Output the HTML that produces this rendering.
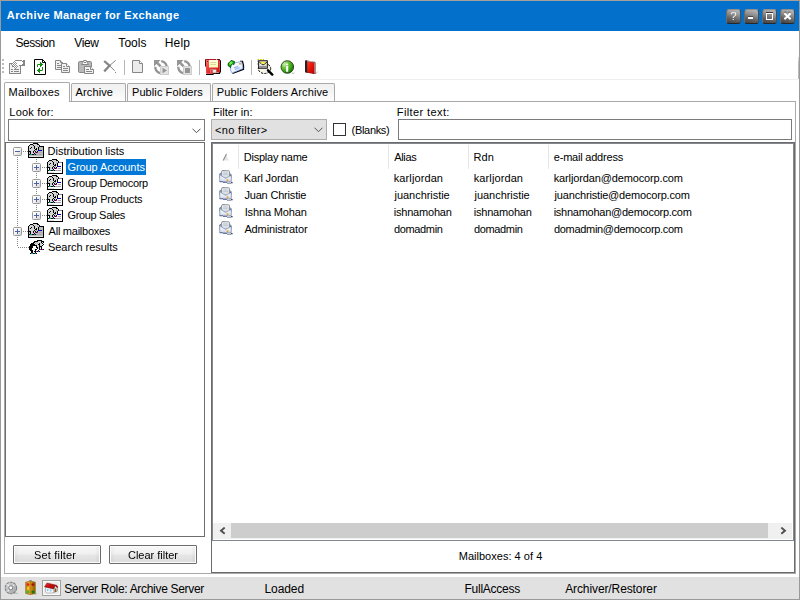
<!DOCTYPE html>
<html lang="en"><head><meta charset="utf-8"><title>Archive Manager for Exchange</title>
<style>
*{box-sizing:border-box}
html,body{margin:0;padding:0}
body{width:800px;height:600px;overflow:hidden;background:#fff;position:relative;
 font-family:"Liberation Sans",sans-serif;font-size:11px;color:#000}
header,nav,main,aside,section,footer{display:contents}
div,span,svg,i,b{position:absolute;display:block}
.t{white-space:pre;line-height:16px;height:16px;font-size:11px;color:#000}
.t12{font-size:12px}
#win{left:0;top:0;width:800px;height:600px;border:1px solid #9a9a9a;border-top-color:#a89f98}
#title{left:1px;top:1px;width:798px;height:30px;background:#0370cc}
.cb{top:9px;width:15px;height:15px;border-radius:3px;border:1px solid #4c4c4c;border-top-color:#8e8e8e;border-left-color:#6a6a6a;border-bottom-color:#262626;
 background:linear-gradient(195deg,#bcbcbc 0%,#9a9a9a 30%,#666 65%,#404040 100%)}
.cb svg{left:-1px;top:-1px}
.cb .q{left:-1px;top:-1px;width:15px;height:15px;line-height:15px;text-align:center;color:#f4f4f4;font-size:11.5px;font-weight:normal;will-change:transform}
#tbline{left:3px;top:79px;width:795px;height:1px;background:#efefef}
#tbr{left:798px;top:57px;width:1px;height:22px;background:linear-gradient(#e0e0e0,#bcbcbc 30%,#b8b8b8)}
.grip{left:2px;width:2px;height:2px;background:#bcbcbc}
.sep{top:60px;width:1px;height:15px;background:#b6b6b6}
#panel{left:4px;top:101px;width:792px;height:473px;border:1px solid #a9a9a9;background:#fff}
.tab{top:83px;height:18px;border:1px solid #a9a9a9;border-bottom:0;border-radius:2px 2px 0 0;
 background:linear-gradient(#f1f1f1,#f4f4f4 40%,#fdfdfd)}
.tab.on{top:82px;height:20px;background:#fff}
.combo{border:1px solid #7a7a7a;background:#fff}
.combo.g{border-color:#adadad;background:#e1e1e1}
#chk{left:333px;top:123px;width:13px;height:13px;border:1px solid #333;background:#fff}
#tree{left:5px;top:142px;width:200px;height:395px;border:1px solid #6d6d6d;background:#fff}
#sel{left:66px;top:159px;width:80px;height:16px;background:#0078d7}
.pm{width:9px;height:9px;border:1px solid #989898;border-radius:1.500px;background:linear-gradient(135deg,#fff 0%,#f4f4f4 50%,#d0d0d0 100%)}
.pm i{left:1px;top:3px;width:5px;height:1px;background:#4b63a7}
.pm b{left:3px;top:1px;width:1px;height:5px;background:#4b63a7}
.dv{width:1px;background-image:linear-gradient(#868686 50%,transparent 50%);background-size:1px 2px}
.dh{height:1px;background-image:linear-gradient(90deg,#868686 50%,transparent 50%);background-size:2px 1px}
.btn{top:545px;width:88px;height:19px;border:1px solid #6c6c6c;border-radius:1px;
 background:linear-gradient(90deg,rgba(0,0,0,.05),rgba(0,0,0,0) 6%,rgba(0,0,0,0) 94%,rgba(0,0,0,.05)),linear-gradient(#f8f8f8 0%,#f0f0f0 45%,#e6e6e6 55%,#dcdcdc 100%);box-shadow:inset 0 0 0 1px #fcfcfc}
.gs{will-change:transform}
#right{left:211px;top:142px;width:584px;height:431px;border:1px solid #6b6b6b;background:#fff}
#list{left:212px;top:143px;width:582px;height:398px;border:1px solid #828790;background:#fff}
.hs{top:145px;width:1px;height:24px;background:#e5e5e5}
#sb{left:213px;top:523px;width:579px;height:16px;background:#f0f0f0}
#sb .th{left:18px;top:0;width:537px;height:15px;background:#cdcdcd}
#status{left:1px;top:577px;width:798px;height:22px;background:#e1e1e1}
#hbox{left:42px;top:580px;width:19px;height:16px;border:1px solid #a0a0a0;background:#ececec;box-shadow:inset 0 0 0 1px #f8f8f8}
</style></head>
<body>

<div id="win"></div>
<header>
<div id="title"></div>
<span class="t" style="left:6.82px;top:7px;letter-spacing:0.401px;font-weight:bold;color:#fff">Archive Manager for Exchange</span>
<div class="cb" style="left:726px"><span class="q">?</span></div>
<div class="cb" style="left:744px"><svg style="left:-1px;top:-1px" width="15" height="15" viewBox="0 0 15 15"><g shape-rendering="crispEdges"><rect x="4" y="7" width="5" height="1" fill="#4a4a4a"/><rect x="4" y="8" width="5" height="2" fill="#fff"/></g></svg></div>
<div class="cb" style="left:762px"><svg style="left:-1px;top:-1px" width="15" height="15" viewBox="0 0 15 15"><g shape-rendering="crispEdges"><rect x="4" y="3" width="7" height="1" fill="#3a3a3a"/><rect x="4.500" y="4.500" width="6" height="6" fill="none" stroke="#fff"/></g></svg></div>
<div class="cb" style="left:780px"><svg style="left:-1px;top:-1px" width="15" height="15" viewBox="0 0 15 15"><path d="M4.500 3.200h6" stroke="#3a3a3a" stroke-width="0.800" stroke-dasharray="2 2"/><path d="M4.400 4.300l6.200 6M10.600 4.300l-6.200 6" stroke="#fff" stroke-width="2"/></svg></div>
</header>
<nav>
<span class="t t12" style="left:15.47px;top:35px;letter-spacing:-0.500px">Session</span>
<span class="t t12" style="left:74.25px;top:35px;letter-spacing:-0.403px">View</span>
<span class="t t12" style="left:118.37px;top:35px;letter-spacing:0.028px">Tools</span>
<span class="t t12" style="left:164.83px;top:35px;letter-spacing:0.108px">Help</span>
</nav>
<section class="toolbar">
<i class="grip" style="top:59px"></i>
<i class="grip" style="top:63px"></i>
<i class="grip" style="top:67px"></i>
<i class="grip" style="top:71px"></i>
<svg style="left:9px;top:60px" width="16" height="14" viewBox="0 0 16 14"><g shape-rendering="crispEdges"><rect x="0" y="3" width="12" height="11" fill="#868686"/><rect x="1" y="4" width="10" height="9" fill="#f1f1f1"/></g><g shape-rendering="crispEdges"><rect x="6" y="0" width="1" height="1" fill="#8f8f8f"/><rect x="5" y="1" width="1" height="1" fill="#8f8f8f"/><rect x="6" y="1" width="1" height="1" fill="#fff"/><rect x="4" y="2" width="1" height="1" fill="#8f8f8f"/><rect x="5" y="2" width="1" height="1" fill="#fff"/><rect x="6" y="2" width="1" height="1" fill="#8f8f8f"/><rect x="3" y="3" width="1" height="1" fill="#8f8f8f"/><rect x="4" y="3" width="1" height="1" fill="#fff"/><rect x="5" y="3" width="1" height="1" fill="#8f8f8f"/><rect x="6" y="3" width="1" height="1" fill="#fff"/><rect x="7" y="3" width="1" height="1" fill="#8f8f8f"/><rect x="2" y="4" width="1" height="1" fill="#8f8f8f"/><rect x="3" y="4" width="1" height="1" fill="#fff"/><rect x="4" y="4" width="1" height="1" fill="#8f8f8f"/><rect x="5" y="4" width="1" height="1" fill="#fff"/><rect x="6" y="4" width="1" height="1" fill="#8f8f8f"/><rect x="7" y="4" width="1" height="1" fill="#fff"/><rect x="8" y="4" width="1" height="1" fill="#8f8f8f"/><rect x="3" y="5" width="1" height="1" fill="#8f8f8f"/><rect x="4" y="5" width="1" height="1" fill="#fff"/><rect x="5" y="5" width="1" height="1" fill="#8f8f8f"/><rect x="6" y="5" width="1" height="1" fill="#fff"/><rect x="7" y="5" width="1" height="1" fill="#8f8f8f"/><rect x="4" y="6" width="1" height="1" fill="#8f8f8f"/><rect x="5" y="6" width="1" height="1" fill="#fff"/><rect x="6" y="6" width="1" height="1" fill="#8f8f8f"/><rect x="7" y="6" width="1" height="1" fill="#fff"/><rect x="8" y="6" width="1" height="1" fill="#8f8f8f"/><rect x="5" y="7" width="1" height="1" fill="#8f8f8f"/><rect x="6" y="7" width="1" height="1" fill="#fff"/><rect x="7" y="7" width="1" height="1" fill="#8f8f8f"/><rect x="6" y="8" width="1" height="1" fill="#8f8f8f"/></g><g shape-rendering="crispEdges"><rect x="2" y="9" width="2" height="1" fill="#868686"/><rect x="5" y="9" width="5" height="1" fill="#868686"/><rect x="2" y="11" width="2" height="1" fill="#868686"/><rect x="5" y="11" width="5" height="1" fill="#868686"/><rect x="3" y="5" width="1" height="2" fill="#868686"/><rect x="4" y="6" width="1" height="1" fill="#868686"/></g><g shape-rendering="crispEdges"><rect x="8" y="1" width="6" height="4" fill="#fff"/><rect x="7" y="0" width="6" height="1" fill="#868686"/><rect x="10" y="5" width="4" height="1" fill="#868686"/><rect x="14" y="0" width="2" height="6" fill="#868686"/><rect x="13" y="1" width="1" height="1" fill="#868686"/><rect x="13" y="4" width="1" height="1" fill="#868686"/></g></svg>
<svg style="left:34px;top:59px" width="12" height="16" viewBox="0 0 12 16"><path d="M0.500 0.500H8.500L11.500 3.500V15.500H0.500Z" fill="#fff" stroke="#000"/><path d="M8.500 0.500V3.500H11.500" fill="none" stroke="#000"/><g shape-rendering="crispEdges"><rect x="6" y="3" width="1" height="5" fill="#0f8c0f"/><rect x="7" y="4" width="1" height="3" fill="#0f8c0f"/><rect x="8" y="5" width="1" height="1" fill="#0f8c0f"/><rect x="4" y="5" width="2" height="1" fill="#0f8c0f"/><rect x="3" y="6" width="1" height="2" fill="#0f8c0f"/><rect x="3" y="5" width="1" height="1" fill="#5fb85f"/><rect x="5" y="9" width="1" height="5" fill="#0f8c0f"/><rect x="4" y="10" width="1" height="3" fill="#0f8c0f"/><rect x="3" y="11" width="1" height="1" fill="#0f8c0f"/><rect x="6" y="11" width="2" height="1" fill="#0f8c0f"/><rect x="8" y="8" width="1" height="3" fill="#0f8c0f"/><rect x="8" y="11" width="1" height="1" fill="#5fb85f"/></g></svg>
<svg style="left:55px;top:60px" width="15" height="13" viewBox="0 0 15 13"><path d="M0.500 0.500H5.500L7.500 2.500V9.500H0.500Z" fill="#f1f1f1" stroke="#868686"/><path d="M5.500 0.500V2.500H7.500" fill="#fff" stroke="#868686"/><path d="M6.500 3.500H11.500L14.500 6.500V12.500H6.500Z" fill="#f1f1f1" stroke="#868686"/><path d="M11.500 3.500V6.500H14.500" fill="#fff" stroke="#868686"/><g shape-rendering="crispEdges"><rect x="2" y="3" width="2" height="1" fill="#868686"/><rect x="2" y="5" width="4" height="1" fill="#868686"/><rect x="2" y="7" width="4" height="1" fill="#868686"/><rect x="8" y="6" width="2" height="1" fill="#868686"/><rect x="8" y="8" width="5" height="1" fill="#868686"/><rect x="8" y="10" width="5" height="1" fill="#868686"/></g></svg>
<svg style="left:78px;top:60px" width="16" height="14" viewBox="0 0 16 14"><rect x="0.500" y="1.500" width="13" height="11" rx="1.200" fill="#b9b9b9" stroke="#868686"/><path d="M3.500 4.500L5 2.200L5.500 0.500H8.500L9 2.200L10.500 4.500Z" fill="#fafafa" stroke="#868686"/><g shape-rendering="crispEdges"><rect x="6" y="2" width="2" height="1" fill="#868686"/></g><path d="M6.500 6.500H12.500L15.500 9.500V13.500H6.500Z" fill="#f1f1f1" stroke="#868686"/><path d="M12.500 6.500V9.500H15.500" fill="#fff" stroke="#868686"/><g shape-rendering="crispEdges"><rect x="8" y="9" width="3" height="1" fill="#868686"/><rect x="8" y="11" width="6" height="1" fill="#868686"/></g></svg>
<svg style="left:103px;top:60px" width="14" height="14" viewBox="0 0 14 14"><path d="M1.200 1L6.500 5.700L1.200 11.400" fill="none" stroke="#868686" stroke-width="2.300" stroke-linejoin="miter"/><path d="M12.700 0.300L6.500 5.700L11.700 10.700" fill="none" stroke="#868686" stroke-width="1"/><rect x="12" y="12" width="1" height="1" fill="#868686"/></svg>
<i class="sep" style="left:124px"></i>
<svg style="left:132px;top:60px" width="11" height="13" viewBox="0 0 11 13"><path d="M0.500 0.500H7.500L10.500 3.500V12.500H0.500Z" fill="#ebebeb" stroke="#868686"/><path d="M7.500 0.500V3.500H10.500" fill="#fff" stroke="#868686"/></svg>
<svg style="left:154px;top:60px" width="15" height="15" viewBox="0 0 15 15"><path d="M0 0H6.500L4.300 2.200L7.500 5.400L5.700 7.200L2.500 4L0 6.500Z" fill="#959595"/><path d="M7.200 1.200A7 7 0 0 1 12.800 6.500" fill="none" stroke="#959595" stroke-width="2.300"/><path d="M1.200 6.800A7 7 0 0 0 6.800 13.300" fill="none" stroke="#959595" stroke-width="2.300"/><rect x="6.500" y="6.500" width="8" height="8" fill="#e3e3e3" stroke="#cdcdcd"/><path d="M8.500 7.800V13.200L13 10.500Z" fill="#959595"/></svg>
<svg style="left:177px;top:60px" width="15" height="15" viewBox="0 0 15 15"><path d="M0 0H6.500L4.300 2.200L7.500 5.400L5.700 7.200L2.500 4L0 6.500Z" fill="#959595"/><path d="M7.200 1.200A7 7 0 0 1 12.800 6.500" fill="none" stroke="#959595" stroke-width="2.300"/><path d="M1.200 6.800A7 7 0 0 0 6.800 13.300" fill="none" stroke="#959595" stroke-width="2.300"/><rect x="6.500" y="6.500" width="8" height="8" fill="#e3e3e3" stroke="#cdcdcd"/><rect x="8" y="8" width="5" height="5" fill="#959595"/></svg>
<i class="sep" style="left:199px"></i>
<svg style="left:205px;top:59px" width="16" height="16" viewBox="0 0 16 16"><defs><linearGradient id="gs" x1="0" y1="0" x2="1" y2="1"><stop offset="0" stop-color="#f57878"/><stop offset="0.500" stop-color="#e83030"/><stop offset="1" stop-color="#d01010"/></linearGradient></defs><path d="M1 15.500H8V14.500H14.500V13H15.500V2L14 0.500H12" fill="none" stroke="#000" stroke-width="1.200"/><path d="M0.500 0.500H13.500L14.800 1.800V13.500H7.500V14.800H1.200Z" fill="url(#gs)"/><path d="M0.500 0.500V7.500" stroke="#5a0808" stroke-width="1"/><path d="M0.500 0.500H11" stroke="#b01818" stroke-width="1"/><rect x="4" y="1.200" width="9" height="7.300" fill="#fcfbc0"/><rect x="4" y="1.200" width="9" height="1.500" fill="#fffef0"/><path d="M5.500 3.500H11M5.500 5.500H11" stroke="#d8d6a0" stroke-width="1"/><rect x="5" y="10.300" width="6.500" height="3.700" rx="0.800" fill="#e6e6e6" stroke="#a05050" stroke-width="0.600"/><rect x="5.500" y="11" width="2.200" height="3.500" fill="#f03030"/><rect x="2" y="2" width="1" height="1" fill="#b01010"/></svg>
<svg style="left:227px;top:60px" width="18" height="15" viewBox="0 0 18 15"><defs><linearGradient id="gm" x1="0" y1="0" x2="1" y2="1"><stop offset="0" stop-color="#ffffff"/><stop offset="0.600" stop-color="#eef4ff"/><stop offset="1" stop-color="#cfe0ff"/></linearGradient><radialGradient id="gg" cx="0.450" cy="0.350" r="0.700"><stop offset="0" stop-color="#a0ff70"/><stop offset="0.500" stop-color="#18c018"/><stop offset="1" stop-color="#087008"/></radialGradient></defs><path d="M5.500 13.500L16.500 9.200V5.500L15.500 1.500H13" fill="none" stroke="#000" stroke-width="1.300"/><path d="M4 3.500L14.500 1.500L16 8.500L5 13L3.500 10Z" fill="url(#gm)" stroke="#6a90e0" stroke-width="0.700"/><path d="M7 8L11 6.300M8 9.500L12.500 7.500" stroke="#8fb0f4" stroke-width="1.100"/><rect x="12.200" y="3" width="1.600" height="1.600" fill="#f59020"/><path d="M1 5.500Q0.500 2.500 3.500 1.500L4 0.500L7.500 1.500L7 4.500L5.500 4Q3.500 4.500 3.500 7.500Z" fill="url(#gg)" stroke="#065006" stroke-width="0.900"/></svg>
<i class="sep" style="left:251px"></i>
<svg style="left:257px;top:59px" width="17" height="17" viewBox="0 0 17 17"><ellipse cx="7.500" cy="9.500" rx="6.200" ry="5" fill="#f6f5ea" stroke="#000" stroke-width="1" stroke-dasharray="2.200 1.100"/><path d="M0.500 0.500H7" stroke="#cfc000" stroke-width="1.400" stroke-dasharray="1.500 1.200"/><path d="M0.500 1.500V6" stroke="#b8b8d0" stroke-width="1.200" stroke-dasharray="1.500 1.200"/><rect x="1.700" y="1.800" width="8.600" height="7.400" fill="#fff" stroke="#000" stroke-width="1"/><path d="M2.500 3.200L6 6.200L9.800 3.200" fill="none" stroke="#000" stroke-width="1"/><path d="M4 3.300L5.500 4.800M6 2.800L8 4.300" stroke="#efe400" stroke-width="1.600"/><path d="M8.600 5.500L9.600 7" stroke="#cfc000" stroke-width="1.200"/><rect x="2.200" y="6.800" width="7.600" height="2" fill="#8a8a8a"/><rect x="2.200" y="6.300" width="7.600" height="0.800" fill="#d8d8e4"/><path d="M11 11.300L15.300 15.600" stroke="#000" stroke-width="2.400" stroke-linecap="round"/></svg>
<svg style="left:280px;top:60px" width="15" height="15" viewBox="0 0 15 15"><defs><radialGradient id="gi" cx="0.300" cy="0.280" r="0.850"><stop offset="0" stop-color="#d8f0c0"/><stop offset="0.350" stop-color="#6cc43a"/><stop offset="0.700" stop-color="#2f9c10"/><stop offset="1" stop-color="#0f5a04"/></radialGradient></defs><ellipse cx="13" cy="13.300" rx="1.600" ry="0.700" fill="#c8c8c8"/><circle cx="7.300" cy="7" r="6.300" fill="url(#gi)" stroke="#2c3c1c" stroke-width="0.900"/><rect x="6.100" y="6" width="2.100" height="5.800" rx="0.400" fill="#fff"/><rect x="6.100" y="3.600" width="2.100" height="1.600" rx="0.700" fill="#fff" opacity="0.900"/></svg>
<svg style="left:304px;top:60px" width="15" height="15" viewBox="0 0 15 15"><defs><linearGradient id="gb" x1="0" y1="0" x2="1" y2="1"><stop offset="0" stop-color="#ff4030"/><stop offset="0.500" stop-color="#e81408"/><stop offset="1" stop-color="#b40404"/></linearGradient></defs><path d="M10.500 13.500L14.500 11L12 14.200Z" fill="#b4b4b4" opacity="0.800"/><path d="M1 1.200Q1.500 0 3 0.500L10.500 1.800Q11.500 2 11.500 3V13Q11.500 14.200 10.300 14L2 12.600Q1 12.400 1 11.500Z" fill="#6a1010"/><path d="M1 1.500Q1.200 0.300 2.500 0.600L3.200 1V12.600L2 12.400Q1 12.200 1 11.300Z" fill="#1c2626"/><path d="M3.200 1.600L10 2.900V13.400L3.200 12.300Z" fill="url(#gb)"/><path d="M3 0.900L10.500 2.200" stroke="#e8e8e8" stroke-width="0.700"/><path d="M10.600 2.800V13.500" stroke="#e0b0b0" stroke-width="0.700"/></svg>
<div id="tbline"></div><div id="tbr"></div>
</section>
<main>
<section class="tabs">
<div id="panel"></div>
<div class="tab" style="left:71px;width:55px"></div>
<div class="tab" style="left:127px;width:84px"></div>
<div class="tab" style="left:212px;width:123px"></div>
<div class="tab on" style="left:4px;width:66px"></div>
<span class="t" style="left:8.55px;top:84px;letter-spacing:0.185px">Mailboxes</span>
<span class="t" style="left:75.59px;top:84px;letter-spacing:0.122px">Archive</span>
<span class="t" style="left:131.99px;top:84px;letter-spacing:0.088px">Public Folders</span>
<span class="t" style="left:216.84px;top:84px;letter-spacing:0.123px">Public Folders Archive</span>
</section>
<aside>
<span class="t" style="left:9.37px;top:104px;letter-spacing:0.184px">Look for:</span>
<div class="combo" style="left:8px;top:119px;width:197px;height:22px"></div><svg style="left:192px;top:128px" width="9" height="6" viewBox="0 0 9 6"><path d="M0.500 0.700l4 4 4-4" fill="none" stroke="#505050" stroke-width="1"/></svg>
<div id="tree"></div><div id="sel"></div>
<i class="dv" style="left:17px;top:157px;height:90px"></i>
<i class="dv" style="left:36px;top:159px;height:52px"></i>
<i class="dh" style="left:23px;top:151px;width:5px"></i>
<i class="dh" style="left:42px;top:167px;width:5px"></i>
<i class="dh" style="left:42px;top:183px;width:5px"></i>
<i class="dh" style="left:42px;top:199px;width:5px"></i>
<i class="dh" style="left:42px;top:215px;width:5px"></i>
<i class="dh" style="left:23px;top:231px;width:5px"></i>
<i class="dh" style="left:18px;top:247px;width:11px"></i>
<div class="pm" style="left:13px;top:147px"><i></i></div>
<div class="pm" style="left:32px;top:163px"><i></i><b></b></div>
<div class="pm" style="left:32px;top:179px"><i></i><b></b></div>
<div class="pm" style="left:32px;top:195px"><i></i><b></b></div>
<div class="pm" style="left:32px;top:211px"><i></i><b></b></div>
<div class="pm" style="left:13px;top:227px"><i></i><b></b></div>
<svg style="left:28px;top:143px" width="16" height="16" viewBox="0 0 16 16"><g shape-rendering="crispEdges"><path fill="#000" d="M5 0h5v1h-5zM2 1h3v1h-3zM9 1h2v1h-2zM1 2h1v1h-1zM5 2h1v1h-1zM11 2h1v1h-1zM0 3h1v1h-1zM6 3h1v1h-1zM11 3h5v1h-5zM0 4h1v1h-1zM3 4h1v1h-1zM6 4h1v1h-1zM10 4h1v1h-1zM15 4h1v1h-1zM0 5h1v1h-1zM2 5h1v1h-1zM6 5h1v1h-1zM8 5h1v1h-1zM10 5h1v1h-1zM15 5h1v1h-1zM0 6h1v1h-1zM7 6h2v1h-2zM10 6h1v1h-1zM15 6h1v1h-1zM0 7h1v1h-1zM6 7h1v1h-1zM15 7h1v1h-1zM0 8h3v1h-3zM5 8h1v1h-1zM7 8h1v1h-1zM9 8h1v1h-1zM15 8h1v1h-1zM0 9h1v1h-1zM2 9h1v1h-1zM5 9h1v1h-1zM8 9h1v1h-1zM15 9h1v1h-1zM0 10h1v1h-1zM2 10h1v1h-1zM6 10h1v1h-1zM15 10h1v1h-1zM0 11h2v1h-2zM4 11h2v1h-2zM7 11h1v1h-1zM15 11h1v1h-1zM0 12h1v1h-1zM15 12h1v1h-1zM0 13h1v1h-1zM15 13h1v1h-1zM0 14h16v1h-16z"/><path fill="#d4d4d4" d="M5 1h4v1h-4zM2 2h3v1h-3zM6 2h5v1h-5zM1 3h5v1h-5zM7 3h2v1h-2zM10 3h1v1h-1zM1 4h2v1h-2zM4 4h2v1h-2zM7 4h3v1h-3zM1 5h1v1h-1zM3 5h3v1h-3zM7 5h1v1h-1zM9 5h1v1h-1zM1 6h6v1h-6zM9 6h1v1h-1zM2 7h4v1h-4zM7 7h1v1h-1zM3 8h2v1h-2zM6 8h1v1h-1zM8 8h1v1h-1zM3 9h2v1h-2zM6 9h1v1h-1zM3 10h3v1h-3z"/><path fill="#a8a8a8" d="M9 3h1v1h-1zM1 7h1v1h-1zM8 7h1v1h-1zM11 9h3v1h-3zM8 11h6v1h-6z"/><path fill="#bcbcbc" d="M11 4h4v1h-4zM11 5h4v1h-4zM11 6h4v1h-4zM9 7h1v1h-1zM14 7h1v1h-1zM10 8h5v1h-5zM1 9h1v1h-1zM10 9h1v1h-1zM14 9h1v1h-1zM1 10h1v1h-1zM7 10h8v1h-8zM14 11h1v1h-1zM1 12h14v1h-14z"/><path fill="#0000b0" d="M10 7h4v1h-4z"/><path fill="#c000c0" d="M7 9h1v1h-1zM9 9h1v1h-1z"/><path fill="#00a8a8" d="M2 11h2v1h-2zM6 11h1v1h-1z"/><path fill="#dedede" d="M1 13h14v1h-14z"/></g></svg>
<svg style="left:47px;top:159px" width="16" height="16" viewBox="0 0 16 16"><g shape-rendering="crispEdges"><path fill="#000" d="M5 0h5v1h-5zM2 1h3v1h-3zM9 1h2v1h-2zM1 2h1v1h-1zM5 2h1v1h-1zM11 2h1v1h-1zM0 3h1v1h-1zM6 3h1v1h-1zM11 3h1v1h-1zM15 3h1v1h-1zM0 4h1v1h-1zM3 4h1v1h-1zM6 4h1v1h-1zM10 4h1v1h-1zM15 4h1v1h-1zM0 5h1v1h-1zM2 5h1v1h-1zM6 5h1v1h-1zM8 5h1v1h-1zM10 5h1v1h-1zM15 5h1v1h-1zM0 6h1v1h-1zM7 6h2v1h-2zM10 6h1v1h-1zM15 6h1v1h-1zM0 7h1v1h-1zM6 7h1v1h-1zM15 7h1v1h-1zM0 8h3v1h-3zM5 8h1v1h-1zM7 8h1v1h-1zM9 8h1v1h-1zM15 8h1v1h-1zM0 9h1v1h-1zM2 9h1v1h-1zM5 9h1v1h-1zM8 9h1v1h-1zM15 9h1v1h-1zM0 10h1v1h-1zM2 10h1v1h-1zM6 10h1v1h-1zM15 10h1v1h-1zM0 11h2v1h-2zM4 11h2v1h-2zM7 11h1v1h-1zM15 11h1v1h-1zM0 12h1v1h-1zM15 12h1v1h-1zM0 13h1v1h-1zM15 13h1v1h-1zM0 14h16v1h-16z"/><path fill="#d4d4d4" d="M5 1h4v1h-4zM2 2h3v1h-3zM6 2h5v1h-5zM1 3h5v1h-5zM7 3h2v1h-2zM10 3h1v1h-1zM1 4h2v1h-2zM4 4h2v1h-2zM7 4h3v1h-3zM1 5h1v1h-1zM3 5h3v1h-3zM7 5h1v1h-1zM9 5h1v1h-1zM1 6h6v1h-6zM9 6h1v1h-1zM2 7h4v1h-4zM7 7h1v1h-1zM3 8h2v1h-2zM6 8h1v1h-1zM8 8h1v1h-1zM3 9h2v1h-2zM6 9h1v1h-1zM3 10h3v1h-3z"/><path fill="#a8a8a8" d="M9 3h1v1h-1zM1 7h1v1h-1zM8 7h1v1h-1zM11 9h3v1h-3zM8 11h6v1h-6z"/><path fill="#8a8a8a" d="M12 3h3v1h-3z"/><path fill="#fff" d="M11 4h4v1h-4zM11 5h4v1h-4zM11 6h4v1h-4zM9 7h1v1h-1zM14 7h1v1h-1zM10 8h5v1h-5zM1 9h1v1h-1zM10 9h1v1h-1zM14 9h1v1h-1zM1 10h1v1h-1zM7 10h8v1h-8zM14 11h1v1h-1zM1 12h14v1h-14zM7 13h8v1h-8z"/><path fill="#0000b0" d="M10 7h4v1h-4z"/><path fill="#c000c0" d="M7 9h1v1h-1zM9 9h1v1h-1z"/><path fill="#00a8a8" d="M2 11h2v1h-2zM6 11h1v1h-1z"/><path fill="#dedede" d="M1 13h6v1h-6z"/></g></svg>
<svg style="left:47px;top:175px" width="16" height="16" viewBox="0 0 16 16"><g shape-rendering="crispEdges"><path fill="#000" d="M5 0h5v1h-5zM2 1h3v1h-3zM9 1h2v1h-2zM1 2h1v1h-1zM5 2h1v1h-1zM11 2h1v1h-1zM0 3h1v1h-1zM6 3h1v1h-1zM11 3h1v1h-1zM15 3h1v1h-1zM0 4h1v1h-1zM3 4h1v1h-1zM6 4h1v1h-1zM10 4h1v1h-1zM15 4h1v1h-1zM0 5h1v1h-1zM2 5h1v1h-1zM6 5h1v1h-1zM8 5h1v1h-1zM10 5h1v1h-1zM15 5h1v1h-1zM0 6h1v1h-1zM7 6h2v1h-2zM10 6h1v1h-1zM15 6h1v1h-1zM0 7h1v1h-1zM6 7h1v1h-1zM15 7h1v1h-1zM0 8h3v1h-3zM5 8h1v1h-1zM7 8h1v1h-1zM9 8h1v1h-1zM15 8h1v1h-1zM0 9h1v1h-1zM2 9h1v1h-1zM5 9h1v1h-1zM8 9h1v1h-1zM15 9h1v1h-1zM0 10h1v1h-1zM2 10h1v1h-1zM6 10h1v1h-1zM15 10h1v1h-1zM0 11h2v1h-2zM4 11h2v1h-2zM7 11h1v1h-1zM15 11h1v1h-1zM0 12h1v1h-1zM15 12h1v1h-1zM0 13h1v1h-1zM15 13h1v1h-1zM0 14h16v1h-16z"/><path fill="#d4d4d4" d="M5 1h4v1h-4zM2 2h3v1h-3zM6 2h5v1h-5zM1 3h5v1h-5zM7 3h2v1h-2zM10 3h1v1h-1zM1 4h2v1h-2zM4 4h2v1h-2zM7 4h3v1h-3zM1 5h1v1h-1zM3 5h3v1h-3zM7 5h1v1h-1zM9 5h1v1h-1zM1 6h6v1h-6zM9 6h1v1h-1zM2 7h4v1h-4zM7 7h1v1h-1zM3 8h2v1h-2zM6 8h1v1h-1zM8 8h1v1h-1zM3 9h2v1h-2zM6 9h1v1h-1zM3 10h3v1h-3z"/><path fill="#a8a8a8" d="M9 3h1v1h-1zM1 7h1v1h-1zM8 7h1v1h-1zM11 9h3v1h-3zM8 11h6v1h-6z"/><path fill="#8a8a8a" d="M12 3h3v1h-3z"/><path fill="#fff" d="M11 4h4v1h-4zM11 5h4v1h-4zM11 6h4v1h-4zM9 7h1v1h-1zM14 7h1v1h-1zM10 8h5v1h-5zM1 9h1v1h-1zM10 9h1v1h-1zM14 9h1v1h-1zM1 10h1v1h-1zM7 10h8v1h-8zM14 11h1v1h-1zM1 12h14v1h-14zM7 13h8v1h-8z"/><path fill="#0000b0" d="M10 7h4v1h-4z"/><path fill="#c000c0" d="M7 9h1v1h-1zM9 9h1v1h-1z"/><path fill="#00a8a8" d="M2 11h2v1h-2zM6 11h1v1h-1z"/><path fill="#dedede" d="M1 13h6v1h-6z"/></g></svg>
<svg style="left:47px;top:191px" width="16" height="16" viewBox="0 0 16 16"><g shape-rendering="crispEdges"><path fill="#000" d="M5 0h5v1h-5zM2 1h3v1h-3zM9 1h2v1h-2zM1 2h1v1h-1zM5 2h1v1h-1zM11 2h1v1h-1zM0 3h1v1h-1zM6 3h1v1h-1zM11 3h1v1h-1zM15 3h1v1h-1zM0 4h1v1h-1zM3 4h1v1h-1zM6 4h1v1h-1zM10 4h1v1h-1zM15 4h1v1h-1zM0 5h1v1h-1zM2 5h1v1h-1zM6 5h1v1h-1zM8 5h1v1h-1zM10 5h1v1h-1zM15 5h1v1h-1zM0 6h1v1h-1zM7 6h2v1h-2zM10 6h1v1h-1zM15 6h1v1h-1zM0 7h1v1h-1zM6 7h1v1h-1zM15 7h1v1h-1zM0 8h3v1h-3zM5 8h1v1h-1zM7 8h1v1h-1zM9 8h1v1h-1zM15 8h1v1h-1zM0 9h1v1h-1zM2 9h1v1h-1zM5 9h1v1h-1zM8 9h1v1h-1zM15 9h1v1h-1zM0 10h1v1h-1zM2 10h1v1h-1zM6 10h1v1h-1zM15 10h1v1h-1zM0 11h2v1h-2zM4 11h2v1h-2zM7 11h1v1h-1zM15 11h1v1h-1zM0 12h1v1h-1zM15 12h1v1h-1zM0 13h1v1h-1zM15 13h1v1h-1zM0 14h16v1h-16z"/><path fill="#d4d4d4" d="M5 1h4v1h-4zM2 2h3v1h-3zM6 2h5v1h-5zM1 3h5v1h-5zM7 3h2v1h-2zM10 3h1v1h-1zM1 4h2v1h-2zM4 4h2v1h-2zM7 4h3v1h-3zM1 5h1v1h-1zM3 5h3v1h-3zM7 5h1v1h-1zM9 5h1v1h-1zM1 6h6v1h-6zM9 6h1v1h-1zM2 7h4v1h-4zM7 7h1v1h-1zM3 8h2v1h-2zM6 8h1v1h-1zM8 8h1v1h-1zM3 9h2v1h-2zM6 9h1v1h-1zM3 10h3v1h-3z"/><path fill="#a8a8a8" d="M9 3h1v1h-1zM1 7h1v1h-1zM8 7h1v1h-1zM11 9h3v1h-3zM8 11h6v1h-6z"/><path fill="#8a8a8a" d="M12 3h3v1h-3z"/><path fill="#fff" d="M11 4h4v1h-4zM11 5h4v1h-4zM11 6h4v1h-4zM9 7h1v1h-1zM14 7h1v1h-1zM10 8h5v1h-5zM1 9h1v1h-1zM10 9h1v1h-1zM14 9h1v1h-1zM1 10h1v1h-1zM7 10h8v1h-8zM14 11h1v1h-1zM1 12h14v1h-14zM7 13h8v1h-8z"/><path fill="#0000b0" d="M10 7h4v1h-4z"/><path fill="#c000c0" d="M7 9h1v1h-1zM9 9h1v1h-1z"/><path fill="#00a8a8" d="M2 11h2v1h-2zM6 11h1v1h-1z"/><path fill="#dedede" d="M1 13h6v1h-6z"/></g></svg>
<svg style="left:47px;top:207px" width="16" height="16" viewBox="0 0 16 16"><g shape-rendering="crispEdges"><path fill="#000" d="M5 0h5v1h-5zM2 1h3v1h-3zM9 1h2v1h-2zM1 2h1v1h-1zM5 2h1v1h-1zM11 2h1v1h-1zM0 3h1v1h-1zM6 3h1v1h-1zM11 3h1v1h-1zM15 3h1v1h-1zM0 4h1v1h-1zM3 4h1v1h-1zM6 4h1v1h-1zM10 4h1v1h-1zM15 4h1v1h-1zM0 5h1v1h-1zM2 5h1v1h-1zM6 5h1v1h-1zM8 5h1v1h-1zM10 5h1v1h-1zM15 5h1v1h-1zM0 6h1v1h-1zM7 6h2v1h-2zM10 6h1v1h-1zM15 6h1v1h-1zM0 7h1v1h-1zM6 7h1v1h-1zM15 7h1v1h-1zM0 8h3v1h-3zM5 8h1v1h-1zM7 8h1v1h-1zM9 8h1v1h-1zM15 8h1v1h-1zM0 9h1v1h-1zM2 9h1v1h-1zM5 9h1v1h-1zM8 9h1v1h-1zM15 9h1v1h-1zM0 10h1v1h-1zM2 10h1v1h-1zM6 10h1v1h-1zM15 10h1v1h-1zM0 11h2v1h-2zM4 11h2v1h-2zM7 11h1v1h-1zM15 11h1v1h-1zM0 12h1v1h-1zM15 12h1v1h-1zM0 13h1v1h-1zM15 13h1v1h-1zM0 14h16v1h-16z"/><path fill="#d4d4d4" d="M5 1h4v1h-4zM2 2h3v1h-3zM6 2h5v1h-5zM1 3h5v1h-5zM7 3h2v1h-2zM10 3h1v1h-1zM1 4h2v1h-2zM4 4h2v1h-2zM7 4h3v1h-3zM1 5h1v1h-1zM3 5h3v1h-3zM7 5h1v1h-1zM9 5h1v1h-1zM1 6h6v1h-6zM9 6h1v1h-1zM2 7h4v1h-4zM7 7h1v1h-1zM3 8h2v1h-2zM6 8h1v1h-1zM8 8h1v1h-1zM3 9h2v1h-2zM6 9h1v1h-1zM3 10h3v1h-3z"/><path fill="#a8a8a8" d="M9 3h1v1h-1zM1 7h1v1h-1zM8 7h1v1h-1zM11 9h3v1h-3zM8 11h6v1h-6z"/><path fill="#8a8a8a" d="M12 3h3v1h-3z"/><path fill="#fff" d="M11 4h4v1h-4zM11 5h4v1h-4zM11 6h4v1h-4zM9 7h1v1h-1zM14 7h1v1h-1zM10 8h5v1h-5zM1 9h1v1h-1zM10 9h1v1h-1zM14 9h1v1h-1zM1 10h1v1h-1zM7 10h8v1h-8zM14 11h1v1h-1zM1 12h14v1h-14zM7 13h8v1h-8z"/><path fill="#0000b0" d="M10 7h4v1h-4z"/><path fill="#c000c0" d="M7 9h1v1h-1zM9 9h1v1h-1z"/><path fill="#00a8a8" d="M2 11h2v1h-2zM6 11h1v1h-1z"/><path fill="#dedede" d="M1 13h6v1h-6z"/></g></svg>
<svg style="left:28px;top:223px" width="16" height="16" viewBox="0 0 16 16"><g shape-rendering="crispEdges"><path fill="#000" d="M5 0h5v1h-5zM2 1h3v1h-3zM9 1h2v1h-2zM1 2h1v1h-1zM5 2h1v1h-1zM11 2h1v1h-1zM0 3h1v1h-1zM6 3h1v1h-1zM11 3h5v1h-5zM0 4h1v1h-1zM3 4h1v1h-1zM6 4h1v1h-1zM10 4h1v1h-1zM15 4h1v1h-1zM0 5h1v1h-1zM2 5h1v1h-1zM6 5h1v1h-1zM8 5h1v1h-1zM10 5h1v1h-1zM15 5h1v1h-1zM0 6h1v1h-1zM7 6h2v1h-2zM10 6h1v1h-1zM15 6h1v1h-1zM0 7h1v1h-1zM6 7h1v1h-1zM15 7h1v1h-1zM0 8h3v1h-3zM5 8h1v1h-1zM7 8h1v1h-1zM9 8h1v1h-1zM15 8h1v1h-1zM0 9h1v1h-1zM2 9h1v1h-1zM5 9h1v1h-1zM8 9h1v1h-1zM15 9h1v1h-1zM0 10h1v1h-1zM2 10h1v1h-1zM6 10h1v1h-1zM15 10h1v1h-1zM0 11h2v1h-2zM4 11h2v1h-2zM7 11h1v1h-1zM15 11h1v1h-1zM0 12h1v1h-1zM15 12h1v1h-1zM0 13h1v1h-1zM15 13h1v1h-1zM0 14h16v1h-16z"/><path fill="#d4d4d4" d="M5 1h4v1h-4zM2 2h3v1h-3zM6 2h5v1h-5zM1 3h5v1h-5zM7 3h2v1h-2zM10 3h1v1h-1zM1 4h2v1h-2zM4 4h2v1h-2zM7 4h3v1h-3zM1 5h1v1h-1zM3 5h3v1h-3zM7 5h1v1h-1zM9 5h1v1h-1zM1 6h6v1h-6zM9 6h1v1h-1zM2 7h4v1h-4zM7 7h1v1h-1zM3 8h2v1h-2zM6 8h1v1h-1zM8 8h1v1h-1zM3 9h2v1h-2zM6 9h1v1h-1zM3 10h3v1h-3z"/><path fill="#a8a8a8" d="M9 3h1v1h-1zM1 7h1v1h-1zM8 7h1v1h-1zM11 9h3v1h-3zM8 11h6v1h-6z"/><path fill="#bcbcbc" d="M11 4h4v1h-4zM11 5h4v1h-4zM11 6h4v1h-4zM9 7h1v1h-1zM14 7h1v1h-1zM10 8h5v1h-5zM1 9h1v1h-1zM10 9h1v1h-1zM14 9h1v1h-1zM1 10h1v1h-1zM7 10h8v1h-8zM14 11h1v1h-1zM1 12h14v1h-14z"/><path fill="#0000b0" d="M10 7h4v1h-4z"/><path fill="#c000c0" d="M7 9h1v1h-1zM9 9h1v1h-1z"/><path fill="#00a8a8" d="M2 11h2v1h-2zM6 11h1v1h-1z"/><path fill="#dedede" d="M1 13h14v1h-14z"/></g></svg>
<svg style="left:28px;top:239px" width="16" height="16" viewBox="0 0 16 16"><g shape-rendering="crispEdges"><path fill="#000" d="M9 1h5v1h-5zM6 2h4v1h-4zM13 2h3v1h-3zM5 3h2v1h-2zM13 3h1v1h-1zM15 3h1v1h-1zM3 4h3v1h-3zM11 4h1v1h-1zM14 4h1v1h-1zM2 5h5v1h-5zM10 5h2v1h-2zM15 5h1v1h-1zM2 6h7v1h-7zM11 6h1v1h-1zM14 6h1v1h-1zM1 7h4v1h-4zM8 7h1v1h-1zM11 7h3v1h-3zM1 8h4v1h-4zM8 8h2v1h-2zM11 8h1v1h-1zM13 8h1v1h-1zM1 9h3v1h-3zM9 9h1v1h-1zM11 9h1v1h-1zM13 9h1v1h-1zM1 10h3v1h-3zM7 10h2v1h-2zM11 10h1v1h-1zM13 10h1v1h-1zM15 10h1v1h-1zM2 11h3v1h-3zM7 11h1v1h-1zM10 11h1v1h-1zM3 12h2v1h-2zM6 12h2v1h-2zM9 12h1v1h-1zM11 12h1v1h-1zM3 13h2v1h-2zM7 13h1v1h-1zM2 14h1v1h-1zM5 14h2v1h-2zM8 14h1v1h-1z"/><path fill="#d4d4d4" d="M10 2h3v1h-3zM7 3h1v1h-1zM9 3h4v1h-4zM14 3h1v1h-1zM6 4h1v1h-1zM8 4h1v1h-1zM12 4h1v1h-1zM7 5h2v1h-2zM12 5h2v1h-2zM10 6h1v1h-1zM12 6h2v1h-2zM10 7h1v1h-1zM10 8h1v1h-1zM12 8h1v1h-1zM10 9h1v1h-1z"/><path fill="#a8a8a8" d="M8 3h1v1h-1zM7 4h1v1h-1z"/><path fill="#bcbcbc" d="M9 4h1v1h-1zM13 4h1v1h-1z"/><path fill="#dedede" d="M10 4h1v1h-1zM9 5h1v1h-1zM9 6h1v1h-1zM9 7h1v1h-1z"/><path fill="#fff" d="M5 7h3v1h-3zM5 8h3v1h-3zM4 9h5v1h-5zM4 10h3v1h-3zM9 10h2v1h-2zM5 11h2v1h-2zM8 11h2v1h-2zM5 12h1v1h-1z"/><path fill="#c000c0" d="M12 10h1v1h-1zM14 10h1v1h-1zM8 12h1v1h-1z"/><path fill="#00a8a8" d="M10 12h1v1h-1zM3 14h2v1h-2zM7 14h1v1h-1z"/></g></svg>
<span class="t" style="left:47.59px;top:143px;letter-spacing:-0.025px">Distribution lists</span>
<span class="t" style="left:67.41px;top:159px;letter-spacing:-0.059px;color:#fff">Group Accounts</span>
<span class="t" style="left:67.41px;top:175px;letter-spacing:-0.272px">Group Democorp</span>
<span class="t" style="left:67.41px;top:191px;letter-spacing:-0.146px">Group Products</span>
<span class="t" style="left:67.41px;top:207px;letter-spacing:-0.320px">Group Sales</span>
<span class="t" style="left:48.61px;top:223px;letter-spacing:-0.255px">All mailboxes</span>
<span class="t" style="left:47.97px;top:239px;letter-spacing:-0.043px">Search results</span>
<div class="btn" style="left:13px"></div><div class="btn" style="left:109px"></div>
<span class="t gs" style="left:34.40px;top:547px;letter-spacing:0.177px">Set filter</span>
<span class="t gs" style="left:127.56px;top:547px;letter-spacing:-0.009px">Clear filter</span>
</aside>
<section class="list">
<span class="t" style="left:212.99px;top:104px;letter-spacing:0.052px">Filter in:</span>
<span class="t" style="left:396.84px;top:104px;letter-spacing:0.391px">Filter text:</span>
<div class="combo g" style="left:211px;top:119px;width:116px;height:21px"></div><svg style="left:314px;top:127px" width="9" height="6" viewBox="0 0 9 6"><path d="M0.500 0.700l4 4 4-4" fill="none" stroke="#505050" stroke-width="1"/></svg>
<span class="t" style="left:215.12px;top:122px;letter-spacing:0.319px">&lt;no filter&gt;</span>
<div id="chk"></div>
<span class="t" style="left:351.57px;top:122px;letter-spacing:-0.312px">(Blanks)</span>
<div class="combo" style="left:398px;top:119px;width:394px;height:21px"></div>
<div id="right"></div><div id="list"></div>
<i class="hs" style="left:238px"></i>
<i class="hs" style="left:388px"></i>
<i class="hs" style="left:468px"></i>
<i class="hs" style="left:548px"></i>
<svg style="left:222px;top:153px" width="8" height="9" viewBox="0 0 8 9"><path d="M4.300 2.500l2.700 5h-5z" fill="#e6e6e6"/><path d="M4.500 1l-3.300 6.600" stroke="#8e8e8e" stroke-width="1.200"/></svg>
<span class="t" style="left:243.84px;top:149px;letter-spacing:-0.251px">Display name</span>
<span class="t" style="left:394.31px;top:149px;letter-spacing:-0.358px">Alias</span>
<span class="t" style="left:473.55px;top:149px;letter-spacing:0.072px">Rdn</span>
<span class="t" style="left:553.81px;top:149px;letter-spacing:-0.213px">e-mail address</span>
<svg style="left:219px;top:170px" width="15" height="15" viewBox="0 0 15 15"><defs><linearGradient id="ge13" x1="0" y1="0" x2="0" y2="1"><stop offset="0" stop-color="#f8fafc"/><stop offset="0.600" stop-color="#e4ecf4"/><stop offset="1" stop-color="#c4d6e8"/></linearGradient></defs><path d="M0.700 4.200L2.500 2.500V8H0.700ZM12.300 4.800L10.500 3V8H12.300Z" fill="#c8d0da" stroke="#7a86a0" stroke-width="0.800"/><path d="M2.500 1.700Q2.500 0.700 3.500 0.700H9.500Q10.500 0.700 10.500 1.700V8H2.500Z" fill="#e6eaee" stroke="#868e9c" stroke-width="0.900"/><path d="M4.200 3H8.800M4.200 4.500H8.800" stroke="#b4bcc6" stroke-width="0.900"/><path d="M0.700 4.800L6.500 8.300L12.300 5.300V11.700H0.700Z" fill="url(#ge13)" stroke="#8492ac" stroke-width="0.800"/><path d="M3 5.500L6.500 7.600L10 5.500V3.500H3Z" fill="#d0d6dc" opacity="0.550"/><rect x="7.600" y="9.300" width="1.800" height="1.800" fill="#f0a040"/><rect x="9" y="10.500" width="1.200" height="1" fill="#e8c090"/><path d="M0.700 11.700H4" stroke="#5a6c98" stroke-width="0.900"/><path d="M4 12.500H8M8 13.200H12" stroke="#5a6c98" stroke-width="0.900"/><rect x="12.200" y="12" width="1.300" height="1.300" fill="#182038"/><rect x="0.600" y="3.500" width="1.100" height="1.100" fill="#4a60a0"/><rect x="10.900" y="4.600" width="1.100" height="1.100" fill="#4a60a0"/><rect x="3.500" y="0" width="2" height="0.900" fill="#8a8a8a"/></svg>
<span class="t" style="left:243.84px;top:170px;letter-spacing:-0.165px">Karl Jordan</span>
<span class="t" style="left:393.74px;top:170px;letter-spacing:0.106px">karljordan</span>
<span class="t" style="left:473.74px;top:170px;letter-spacing:0.106px">karljordan</span>
<span class="t" style="left:553.74px;top:170px;letter-spacing:-0.137px">karljordan@democorp.com</span>
<svg style="left:219px;top:187px" width="15" height="15" viewBox="0 0 15 15"><defs><linearGradient id="ge14" x1="0" y1="0" x2="0" y2="1"><stop offset="0" stop-color="#f8fafc"/><stop offset="0.600" stop-color="#e4ecf4"/><stop offset="1" stop-color="#c4d6e8"/></linearGradient></defs><path d="M0.700 4.200L2.500 2.500V8H0.700ZM12.300 4.800L10.500 3V8H12.300Z" fill="#c8d0da" stroke="#7a86a0" stroke-width="0.800"/><path d="M2.500 1.700Q2.500 0.700 3.500 0.700H9.500Q10.500 0.700 10.500 1.700V8H2.500Z" fill="#e6eaee" stroke="#868e9c" stroke-width="0.900"/><path d="M4.200 3H8.800M4.200 4.500H8.800" stroke="#b4bcc6" stroke-width="0.900"/><path d="M0.700 4.800L6.500 8.300L12.300 5.300V11.700H0.700Z" fill="url(#ge14)" stroke="#8492ac" stroke-width="0.800"/><path d="M3 5.500L6.500 7.600L10 5.500V3.500H3Z" fill="#d0d6dc" opacity="0.550"/><rect x="7.600" y="9.300" width="1.800" height="1.800" fill="#f0a040"/><rect x="9" y="10.500" width="1.200" height="1" fill="#e8c090"/><path d="M0.700 11.700H4" stroke="#5a6c98" stroke-width="0.900"/><path d="M4 12.500H8M8 13.200H12" stroke="#5a6c98" stroke-width="0.900"/><rect x="12.200" y="12" width="1.300" height="1.300" fill="#182038"/><rect x="0.600" y="3.500" width="1.100" height="1.100" fill="#4a60a0"/><rect x="10.900" y="4.600" width="1.100" height="1.100" fill="#4a60a0"/><rect x="3.500" y="0" width="2" height="0.900" fill="#8a8a8a"/></svg>
<span class="t" style="left:244.41px;top:187px;letter-spacing:-0.181px">Juan Christie</span>
<span class="t" style="left:394.59px;top:187px;letter-spacing:-0.050px">juanchristie</span>
<span class="t" style="left:474.59px;top:187px;letter-spacing:-0.050px">juanchristie</span>
<span class="t" style="left:554.59px;top:187px;letter-spacing:-0.175px">juanchristie@democorp.com</span>
<svg style="left:219px;top:204px" width="15" height="15" viewBox="0 0 15 15"><defs><linearGradient id="ge15" x1="0" y1="0" x2="0" y2="1"><stop offset="0" stop-color="#f8fafc"/><stop offset="0.600" stop-color="#e4ecf4"/><stop offset="1" stop-color="#c4d6e8"/></linearGradient></defs><path d="M0.700 4.200L2.500 2.500V8H0.700ZM12.300 4.800L10.500 3V8H12.300Z" fill="#c8d0da" stroke="#7a86a0" stroke-width="0.800"/><path d="M2.500 1.700Q2.500 0.700 3.500 0.700H9.500Q10.500 0.700 10.500 1.700V8H2.500Z" fill="#e6eaee" stroke="#868e9c" stroke-width="0.900"/><path d="M4.200 3H8.800M4.200 4.500H8.800" stroke="#b4bcc6" stroke-width="0.900"/><path d="M0.700 4.800L6.500 8.300L12.300 5.300V11.700H0.700Z" fill="url(#ge15)" stroke="#8492ac" stroke-width="0.800"/><path d="M3 5.500L6.500 7.600L10 5.500V3.500H3Z" fill="#d0d6dc" opacity="0.550"/><rect x="7.600" y="9.300" width="1.800" height="1.800" fill="#f0a040"/><rect x="9" y="10.500" width="1.200" height="1" fill="#e8c090"/><path d="M0.700 11.700H4" stroke="#5a6c98" stroke-width="0.900"/><path d="M4 12.500H8M8 13.200H12" stroke="#5a6c98" stroke-width="0.900"/><rect x="12.200" y="12" width="1.300" height="1.300" fill="#182038"/><rect x="0.600" y="3.500" width="1.100" height="1.100" fill="#4a60a0"/><rect x="10.900" y="4.600" width="1.100" height="1.100" fill="#4a60a0"/><rect x="3.500" y="0" width="2" height="0.900" fill="#8a8a8a"/></svg>
<span class="t" style="left:244.66px;top:204px;letter-spacing:-0.139px">Ishna Mohan</span>
<span class="t" style="left:393.66px;top:204px;letter-spacing:-0.190px">ishnamohan</span>
<span class="t" style="left:473.66px;top:204px;letter-spacing:-0.190px">ishnamohan</span>
<span class="t" style="left:553.66px;top:204px;letter-spacing:-0.256px">ishnamohan@democorp.com</span>
<svg style="left:219px;top:221px" width="15" height="15" viewBox="0 0 15 15"><defs><linearGradient id="ge16" x1="0" y1="0" x2="0" y2="1"><stop offset="0" stop-color="#f8fafc"/><stop offset="0.600" stop-color="#e4ecf4"/><stop offset="1" stop-color="#c4d6e8"/></linearGradient></defs><path d="M0.700 4.200L2.500 2.500V8H0.700ZM12.300 4.800L10.500 3V8H12.300Z" fill="#c8d0da" stroke="#7a86a0" stroke-width="0.800"/><path d="M2.500 1.700Q2.500 0.700 3.500 0.700H9.500Q10.500 0.700 10.500 1.700V8H2.500Z" fill="#e6eaee" stroke="#868e9c" stroke-width="0.900"/><path d="M4.200 3H8.800M4.200 4.500H8.800" stroke="#b4bcc6" stroke-width="0.900"/><path d="M0.700 4.800L6.500 8.300L12.300 5.300V11.700H0.700Z" fill="url(#ge16)" stroke="#8492ac" stroke-width="0.800"/><path d="M3 5.500L6.500 7.600L10 5.500V3.500H3Z" fill="#d0d6dc" opacity="0.550"/><rect x="7.600" y="9.300" width="1.800" height="1.800" fill="#f0a040"/><rect x="9" y="10.500" width="1.200" height="1" fill="#e8c090"/><path d="M0.700 11.700H4" stroke="#5a6c98" stroke-width="0.900"/><path d="M4 12.500H8M8 13.200H12" stroke="#5a6c98" stroke-width="0.900"/><rect x="12.200" y="12" width="1.300" height="1.300" fill="#182038"/><rect x="0.600" y="3.500" width="1.100" height="1.100" fill="#4a60a0"/><rect x="10.900" y="4.600" width="1.100" height="1.100" fill="#4a60a0"/><rect x="3.500" y="0" width="2" height="0.900" fill="#8a8a8a"/></svg>
<span class="t" style="left:244.40px;top:221px;letter-spacing:-0.127px">Administrator</span>
<span class="t" style="left:393.97px;top:221px;letter-spacing:-0.351px">domadmin</span>
<span class="t" style="left:473.97px;top:221px;letter-spacing:-0.351px">domadmin</span>
<span class="t" style="left:553.97px;top:221px;letter-spacing:-0.315px">domadmin@democorp.com</span>
<div id="sb"><i class="th"></i><svg style="left:6px;top:4px" width="7" height="8" viewBox="0 0 7 8"><path d="M5.700 0.600l-3.700 3.100 3.700 3.100" fill="none" stroke="#4f4f4f" stroke-width="1.900"/></svg><svg style="left:567px;top:4px" width="7" height="8" viewBox="0 0 7 8"><path d="M1.300 0.600l3.700 3.100-3.700 3.100" fill="none" stroke="#4f4f4f" stroke-width="1.900"/></svg></div>
<span class="t" style="left:458.70px;top:548px;letter-spacing:0.025px">Mailboxes: 4 of 4</span>
</section>
</main>
<footer>
<div id="status"></div>
<svg style="left:4px;top:581px" width="14" height="14" viewBox="0 0 14 14"><defs><linearGradient id="gr" x1="0" y1="0" x2="1" y2="1"><stop offset="0" stop-color="#ececec"/><stop offset="0.300" stop-color="#c6c8ca"/><stop offset="0.700" stop-color="#b2b4b6"/><stop offset="1" stop-color="#9a9c9e"/></linearGradient></defs><ellipse cx="11.800" cy="12.300" rx="2.400" ry="0.800" fill="#bebebe"/><circle cx="6.900" cy="7" r="5.700" fill="url(#gr)" stroke="#808080" stroke-width="1.100" stroke-dasharray="2.800 0.780"/><path d="M3.500 3.500L5 5M10.300 3.500L9 5M3.500 10.500L5 9" stroke="#f6f6f6" stroke-width="1.100" opacity="0.850"/><circle cx="6.800" cy="6.800" r="2" fill="#fcfcfc" stroke="#727272" stroke-width="0.900"/></svg>
<svg style="left:25px;top:580px" width="12" height="16" viewBox="0 0 12 16"><defs><linearGradient id="gl" x1="0" y1="0" x2="1" y2="0"><stop offset="0" stop-color="#b87c10"/><stop offset="0.250" stop-color="#eaa828"/><stop offset="0.550" stop-color="#d08c14"/><stop offset="1" stop-color="#8a5808"/></linearGradient></defs><ellipse cx="10.500" cy="13.800" rx="1.800" ry="0.700" fill="#bdbdbd"/><rect x="4.200" y="0" width="2.600" height="1.500" rx="0.700" fill="#8a8a8a"/><path d="M0.700 2.200Q5.500 0.300 10.300 2.200V13.500Q5.500 15.600 0.700 13.500Z" fill="url(#gl)" stroke="#8a6010" stroke-width="0.600"/><path d="M5.500 2V14.500" stroke="#b87c10" stroke-width="0.700"/><circle cx="3" cy="4.600" r="1.400" fill="#e82020"/><circle cx="7.900" cy="4.600" r="1.400" fill="#a81010"/><circle cx="3" cy="8.400" r="1" fill="#f4dc20"/><circle cx="7.900" cy="8.400" r="1" fill="#b08410"/><circle cx="3" cy="12" r="1.400" fill="#30c030"/><circle cx="7.900" cy="12" r="1.400" fill="#0c800c"/></svg>
<div id="hbox"></div>
<svg style="left:44px;top:582px" width="15" height="12" viewBox="0 0 15 12"><defs><linearGradient id="gh" x1="0" y1="0" x2="1" y2="1"><stop offset="0" stop-color="#f06060"/><stop offset="0.350" stop-color="#d01010"/><stop offset="1" stop-color="#980808"/></linearGradient></defs><path d="M1.500 5.500H10V10.500L8 11H3L1.500 10Z" fill="#fafafa" stroke="#a4a4a4" stroke-width="0.700"/><path d="M10 5.500L11.500 3.500L13.500 6V9L10 10.500Z" fill="#d8d8d8" stroke="#8c8c8c" stroke-width="0.600"/><rect x="10.700" y="6.500" width="1.600" height="3.500" fill="#8a5a18"/><path d="M0.500 4.800L3 1L11.500 3L9.500 7Z" fill="url(#gh)" stroke="#7a0808" stroke-width="0.500"/><path d="M11.500 3L13.800 5.500" stroke="#8a0c0c" stroke-width="1.300"/><rect x="2.800" y="6.800" width="1.800" height="2.400" rx="0.600" fill="#88ccf0"/><rect x="5.800" y="7.200" width="1.800" height="2.400" rx="0.600" fill="#88ccf0"/></svg>
<span class="t t12" style="left:64.27px;top:581px;letter-spacing:-0.307px">Server Role: Archive Server</span>
<span class="t t12" style="left:264.48px;top:581px;letter-spacing:-0.085px">Loaded</span>
<span class="t t12" style="left:464.48px;top:581px;letter-spacing:-0.249px">FullAccess</span>
<span class="t t12" style="left:565.16px;top:581px;letter-spacing:-0.102px">Archiver/Restorer</span>
</footer>
</body></html>
